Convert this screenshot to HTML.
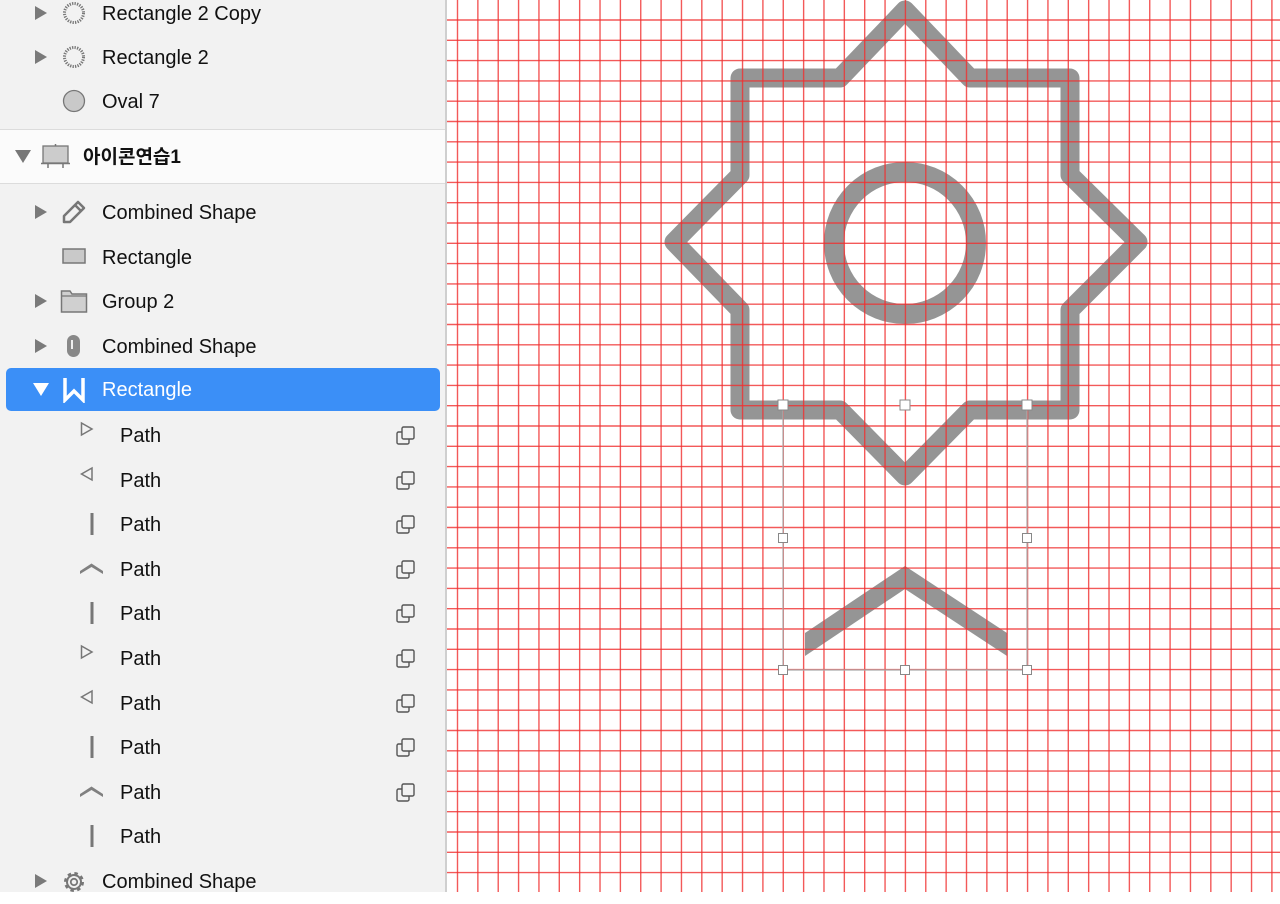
<!DOCTYPE html>
<html><head><meta charset="utf-8"><style>
html,body{margin:0;padding:0;width:1280px;height:892px;overflow:hidden;background:#fff;font-family:"Liberation Sans","Noto Sans CJK KR",sans-serif;}
#side{position:absolute;left:0;top:0;width:445px;height:892px;background:#f2f2f2;border-right:2px solid #cfcfcf;}
.row{position:absolute;left:0;width:445px;height:44px;}
.t{position:absolute;font-size:20px;color:#111;line-height:44px;top:1px;white-space:nowrap}
.tri{position:absolute;width:0;height:0;border-top:7px solid transparent;border-bottom:7px solid transparent;border-left:12px solid #7a7a7a;left:35px;top:15px}
.ic{position:absolute}
.dup{position:absolute;left:396px;top:13px}
</style></head><body>
<svg style="position:absolute;left:447px;top:0" width="833" height="892" viewBox="447 0 833 892">
<path d="M905 10 L970 78 L1070 78 L1070 175 L1138 242 L1070 310 L1070 410 L970 410 L905 476 L840 410 L740 410 L740 310 L674 242 L740 175 L740 78 L840 78 Z" fill="none" stroke="#959595" stroke-width="19" stroke-linejoin="round"/>
<circle cx="905" cy="243" r="71" fill="none" stroke="#959595" stroke-width="20"/>
<polygon points="805,633 905,566 1007,633 1007,656 905,589 805,656" fill="#959595"/>
<g id="grid" stroke="#f03030" stroke-width="1.4" stroke-opacity="0.8"></g>
<g stroke="#aaa" stroke-width="1.2" fill="none">
<path d="M783 405V670H1027V405"/>
</g>
<g fill="#fff" stroke="#888" stroke-width="1">
<rect x="778" y="400" width="10" height="10"/>
<rect x="900" y="400" width="10" height="10"/>
<rect x="1022" y="400" width="10" height="10"/>
<rect x="778.5" y="533.5" width="9" height="9"/>
<rect x="1022.5" y="533.5" width="9" height="9"/>
<rect x="778.5" y="665.5" width="9" height="9"/>
<rect x="900.5" y="665.5" width="9" height="9"/>
<rect x="1022.5" y="665.5" width="9" height="9"/>
</g>
</svg>
<script>
(function(){var g=document.getElementById('grid'),s='';
for(var k=0;k<41;k++){var x=(457.5+20.36*k).toFixed(2);s+='<line x1="'+x+'" y1="0" x2="'+x+'" y2="892"/>';}
for(var k=0;k<44;k++){var y=(20+20.3*k).toFixed(2);s+='<line x1="447" y1="'+y+'" x2="1280" y2="'+y+'"/>';}
g.innerHTML=s;})();
</script>
<div id="side">
<div class="row" style="top:-9px"><div class="tri"></div>
<svg class="ic" style="left:62px;top:10px" width="24" height="24"><circle cx="12" cy="12" r="9.5" fill="none" stroke="#777" stroke-width="3" stroke-dasharray="1.3 1.2"/></svg>
<div class="t" style="left:102px">Rectangle 2 Copy</div></div>
<div class="row" style="top:35px"><div class="tri"></div>
<svg class="ic" style="left:62px;top:10px" width="24" height="24"><circle cx="12" cy="12" r="9.5" fill="none" stroke="#777" stroke-width="3" stroke-dasharray="1.3 1.2"/></svg>
<div class="t" style="left:102px">Rectangle 2</div></div>
<div class="row" style="top:79px">
<svg class="ic" style="left:62px;top:10px" width="24" height="24"><circle cx="12" cy="12" r="10.5" fill="#c9c9c9" stroke="#777" stroke-width="1.3"/></svg>
<div class="t" style="left:102px">Oval 7</div></div>
<div style="position:absolute;left:0;top:129px;width:445px;height:53px;background:#fbfbfb;border-top:1.5px solid #dcdcdc;border-bottom:1.5px solid #dcdcdc">
<div style="position:absolute;left:15px;top:20px;width:0;height:0;border-left:8px solid transparent;border-right:8px solid transparent;border-top:13px solid #777"></div>
<svg class="ic" style="left:40px;top:13px" width="32" height="28"><rect x="3" y="3" width="25" height="17" fill="#ccc" stroke="#777" stroke-width="1.3"/><path d="M1 20.5H30M8 20v5M23 20v5M15.5 1v2" stroke="#777" stroke-width="1.5"/></svg>
<div class="t" style="left:83px;top:6px;font-weight:bold;font-size:19px">아이콘연습1</div></div>
<div class="row" style="top:190px"><div class="tri"></div>
<svg class="ic" style="left:60px;top:9px" width="28" height="26"><path d="M4 23 L4 17 L18 3 L24 9 L10 23 Z M15 6 L21 12" fill="none" stroke="#777" stroke-width="2.5" stroke-linejoin="round"/></svg>
<div class="t" style="left:102px">Combined Shape</div></div>
<div class="row" style="top:235px">
<svg class="ic" style="left:62px;top:12px" width="24" height="20"><rect x="1" y="2" width="22" height="14" fill="#c9c9c9" stroke="#777" stroke-width="1.5"/></svg>
<div class="t" style="left:102px">Rectangle</div></div>
<div class="row" style="top:279px"><div class="tri"></div>
<svg class="ic" style="left:60px;top:9px" width="28" height="26"><path d="M1.5 24V3H10l2 3H26.5V24Z" fill="#d0d0d0" stroke="#777" stroke-width="1.5"/><path d="M1.5 8H26.5" stroke="#777" stroke-width="1.3"/></svg>
<div class="t" style="left:102px">Group 2</div></div>
<div class="row" style="top:324px"><div class="tri"></div>
<svg class="ic" style="left:64px;top:9px" width="20" height="26"><rect x="3" y="2" width="13" height="22" rx="6.5" fill="#888" /><path d="M8 7v9" stroke="#eee" stroke-width="2"/></svg>
<div class="t" style="left:102px">Combined Shape</div></div>
<div style="position:absolute;left:6px;top:368px;width:434px;height:43px;background:#3b8ff7;border-radius:5px">
<div style="position:absolute;left:27px;top:15px;width:0;height:0;border-left:8px solid transparent;border-right:8px solid transparent;border-top:13px solid #fff"></div>
<svg class="ic" style="left:56px;top:9px" width="24" height="26"><path d="M3 1V23L12 14L21 23V1" fill="none" stroke="#fff" stroke-width="3.5"/></svg>
<div class="t" style="left:96px;color:#fff;top:0">Rectangle</div></div>
<div class="row" style="top:413px"><svg class="ic" style="left:80px;top:8px" width="14" height="16"><path d="M1.5 2L12 8L1.5 14Z" fill="none" stroke="#777" stroke-width="1.5"/></svg><div class="t" style="left:120px">Path</div><svg class="dup" width="20" height="20"><rect x="1" y="6" width="12" height="12" rx="1.5" fill="none" stroke="#555" stroke-width="1.4"/><rect x="6" y="1" width="12" height="12" rx="1.5" fill="#f2f2f2" stroke="#555" stroke-width="1.4"/></svg></div>
<div class="row" style="top:458px"><svg class="ic" style="left:80px;top:8px" width="14" height="16"><path d="M12 2L1.5 8L12 14Z" fill="none" stroke="#777" stroke-width="1.5"/></svg><div class="t" style="left:120px">Path</div><svg class="dup" width="20" height="20"><rect x="1" y="6" width="12" height="12" rx="1.5" fill="none" stroke="#555" stroke-width="1.4"/><rect x="6" y="1" width="12" height="12" rx="1.5" fill="#f2f2f2" stroke="#555" stroke-width="1.4"/></svg></div>
<div class="row" style="top:502px"><svg class="ic" style="left:89px;top:10px" width="6" height="24"><path d="M3 1V23" stroke="#777" stroke-width="3"/></svg><div class="t" style="left:120px">Path</div><svg class="dup" width="20" height="20"><rect x="1" y="6" width="12" height="12" rx="1.5" fill="none" stroke="#555" stroke-width="1.4"/><rect x="6" y="1" width="12" height="12" rx="1.5" fill="#f2f2f2" stroke="#555" stroke-width="1.4"/></svg></div>
<div class="row" style="top:547px"><svg class="ic" style="left:79px;top:14px" width="26" height="14"><path d="M1 10L12.5 2.5L24 10V13L12.5 6L1 13Z" fill="#808080"/></svg><div class="t" style="left:120px">Path</div><svg class="dup" width="20" height="20"><rect x="1" y="6" width="12" height="12" rx="1.5" fill="none" stroke="#555" stroke-width="1.4"/><rect x="6" y="1" width="12" height="12" rx="1.5" fill="#f2f2f2" stroke="#555" stroke-width="1.4"/></svg></div>
<div class="row" style="top:591px"><svg class="ic" style="left:89px;top:10px" width="6" height="24"><path d="M3 1V23" stroke="#777" stroke-width="3"/></svg><div class="t" style="left:120px">Path</div><svg class="dup" width="20" height="20"><rect x="1" y="6" width="12" height="12" rx="1.5" fill="none" stroke="#555" stroke-width="1.4"/><rect x="6" y="1" width="12" height="12" rx="1.5" fill="#f2f2f2" stroke="#555" stroke-width="1.4"/></svg></div>
<div class="row" style="top:636px"><svg class="ic" style="left:80px;top:8px" width="14" height="16"><path d="M1.5 2L12 8L1.5 14Z" fill="none" stroke="#777" stroke-width="1.5"/></svg><div class="t" style="left:120px">Path</div><svg class="dup" width="20" height="20"><rect x="1" y="6" width="12" height="12" rx="1.5" fill="none" stroke="#555" stroke-width="1.4"/><rect x="6" y="1" width="12" height="12" rx="1.5" fill="#f2f2f2" stroke="#555" stroke-width="1.4"/></svg></div>
<div class="row" style="top:681px"><svg class="ic" style="left:80px;top:8px" width="14" height="16"><path d="M12 2L1.5 8L12 14Z" fill="none" stroke="#777" stroke-width="1.5"/></svg><div class="t" style="left:120px">Path</div><svg class="dup" width="20" height="20"><rect x="1" y="6" width="12" height="12" rx="1.5" fill="none" stroke="#555" stroke-width="1.4"/><rect x="6" y="1" width="12" height="12" rx="1.5" fill="#f2f2f2" stroke="#555" stroke-width="1.4"/></svg></div>
<div class="row" style="top:725px"><svg class="ic" style="left:89px;top:10px" width="6" height="24"><path d="M3 1V23" stroke="#777" stroke-width="3"/></svg><div class="t" style="left:120px">Path</div><svg class="dup" width="20" height="20"><rect x="1" y="6" width="12" height="12" rx="1.5" fill="none" stroke="#555" stroke-width="1.4"/><rect x="6" y="1" width="12" height="12" rx="1.5" fill="#f2f2f2" stroke="#555" stroke-width="1.4"/></svg></div>
<div class="row" style="top:770px"><svg class="ic" style="left:79px;top:14px" width="26" height="14"><path d="M1 10L12.5 2.5L24 10V13L12.5 6L1 13Z" fill="#808080"/></svg><div class="t" style="left:120px">Path</div><svg class="dup" width="20" height="20"><rect x="1" y="6" width="12" height="12" rx="1.5" fill="none" stroke="#555" stroke-width="1.4"/><rect x="6" y="1" width="12" height="12" rx="1.5" fill="#f2f2f2" stroke="#555" stroke-width="1.4"/></svg></div>
<div class="row" style="top:814px"><svg class="ic" style="left:89px;top:10px" width="6" height="24"><path d="M3 1V23" stroke="#777" stroke-width="3"/></svg><div class="t" style="left:120px">Path</div></div>
<div class="row" style="top:859px"><div class="tri"></div>
<svg class="ic" style="left:61px;top:10px" width="26" height="26"><circle cx="13" cy="13" r="8" fill="none" stroke="#777" stroke-width="4" stroke-dasharray="3.2 3.1"/><circle cx="13" cy="13" r="7" fill="none" stroke="#777" stroke-width="2"/><circle cx="13" cy="13" r="3.2" fill="none" stroke="#777" stroke-width="1.8"/></svg>
<div class="t" style="left:102px">Combined Shape</div></div>
</div>
</body></html>
